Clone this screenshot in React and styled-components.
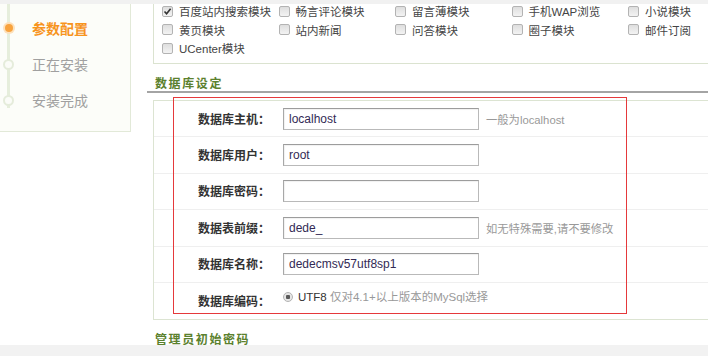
import React from "react";
import styled, { createGlobalStyle } from "styled-components";

const Global = createGlobalStyle`
  html, body { margin: 0; padding: 0; background: #fff; overflow: hidden; }
  body { font-family: "Liberation Sans", "Noto Sans CJK SC", sans-serif; color: #333; }
  * { box-sizing: border-box; }
`;

const Page = styled.div`
  position: relative;
  width: 708px;
  height: 356px;
  overflow: hidden;
  display: flex;
  flex-direction: column;
  background: #fff;
`;

const TopBar = styled.div`
  height: 4px;
  flex: none;
  background: #f1f1f1;
`;

const BottomBar = styled.div`
  height: 11px;
  flex: none;
  background: #f2f2f2;
`;

const Viewport = styled.div`
  flex: 1;
  overflow: hidden;
`;

const Scroll = styled.div`
  margin-top: -8px;
  display: flex;
  align-items: flex-start;
`;

const Sidebar = styled.aside`
  flex: none;
  width: 131px;
  height: 136px;
  background: #fcfdf9;
  border-right: 1px solid #e2e9d8;
  border-bottom: 1px solid #e2e9d8;
`;

const Steps = styled.ul`
  list-style: none;
  margin: 0;
  padding: 14px 0 0;
  background: linear-gradient(#e6eedc, #e6eedc) no-repeat 7px 0 / 3px 112px;
`;

const Step = styled.li`
  display: flex;
  align-items: center;
  height: 36px;
`;

const Dot = styled.span`
  flex: none;
  width: ${(p) => (p.$active ? 8 : 11)}px;
  height: ${(p) => (p.$active ? 8 : 11)}px;
  margin-left: ${(p) => (p.$active ? 4.5 : 3)}px;
  margin-right: ${(p) => (p.$active ? 19.5 : 18)}px;
  border-radius: 50%;
  background: ${(p) => (p.$active ? "#f8a33e" : "#fbfcf8")};
  border: ${(p) => (p.$active ? "none" : "2px solid #e5ecdb")};
  box-shadow: ${(p) => (p.$active ? "0 0 0 2px #fde1bc" : "none")};
`;

const StepLabel = styled.span`
  font-family: "Noto Sans CJK SC", sans-serif;
  font-size: 14px;
  line-height: 18px;
  font-weight: ${(p) => (p.$active ? 700 : 400)};
  color: ${(p) => (p.$active ? "#f7941e" : "#a0a0a0")};
`;

const Content = styled.main`
  flex: none;
  width: 640px;
  margin-left: 16px;
`;

const CheckPanel = styled.div`
  margin-left: 6px;
  border: 1px solid #dbe3d0;
  border-right: none;
  padding: 5px 0 5px 8px;
  display: grid;
  grid-template-columns: repeat(5, 116.5px);
  grid-auto-rows: 18.5px;
`;

const CheckItem = styled.label`
  display: flex;
  align-items: center;
  gap: 6px;
  font-family: "Liberation Sans", "Noto Sans CJK SC", sans-serif;
  font-size: 11.5px;
  color: #444;
  white-space: nowrap;
`;

const Box = styled.span`
  flex: none;
  width: 11px;
  height: 11px;
  border: 1px solid #b3b3b3;
  border-radius: 2px;
  background: linear-gradient(#dedede, #f3f3f3);
  display: flex;
  align-items: center;
  justify-content: center;
`;

const SectionTitle = styled.h3`
  margin: ${(p) => p.$gap}px 0 0;
  padding-left: 8px;
  height: 18px;
  line-height: 16px;
  font-family: "Noto Sans CJK SC", sans-serif;
  font-size: 12px;
  font-weight: 700;
  letter-spacing: 1.6px;
  color: #5b812e;
  border-bottom: ${(p) => (p.$line ? "2px solid #a4a4a4" : "none")};
`;

const FormPanel = styled.div`
  margin: 7.5px 0 0 6px;
  border: 1px solid #dce4d2;
  border-right: none;
`;

const Row = styled.div`
  display: grid;
  grid-template-columns: 129px 1fr;
  align-items: ${(p) => (p.$top ? "start" : "center")};
  height: 36.4px;
  border-bottom: 1px solid #efefef;
  &:last-child { border-bottom: none; }
`;

const Label = styled.span`
  align-self: center;
  padding-left: 44px;
  font-family: "Noto Sans CJK SC", sans-serif;
  font-size: 12px;
  font-weight: 700;
  color: #333;
  line-height: 16px;
`;

const Field = styled.div`
  display: flex;
  align-items: center;
  margin-top: ${(p) => (p.$top ? 6 : 0)}px;
`;

const TextInput = styled.input`
  width: 196px;
  height: 22px;
  padding: 0 5px;
  border: 1px solid #b9b9b9;
  border-top-color: #9c9c9c;
  border-left-color: #a8a8a8;
  box-shadow: inset 1px 1px 1px rgba(0, 0, 0, 0.06);
  font-family: "Liberation Sans", sans-serif;
  font-size: 12px;
  color: #332a55;
  outline: none;
  background: #fff;
`;

const Hint = styled.span`
  margin-left: 7px;
  font-family: "Liberation Sans", "Noto Sans CJK SC", sans-serif;
  font-size: 11.3px;
  color: #999;
`;

const Radio = styled.span`
  flex: none;
  width: 10px;
  height: 10px;
  border-radius: 50%;
  border: 1px solid #b3b3b3;
  background: radial-gradient(circle, #5a5a5a 0 2px, #e6e6e6 2.5px);
  margin-right: 5px;
`;

const RadioText = styled.span`
  font-family: "Liberation Sans", "Noto Sans CJK SC", sans-serif;
  font-size: 11.5px;
  line-height: 16px;
  color: #333;
`;

const Muted = styled.span`
  color: #999;
`;

const Annotation = styled.div`
  position: absolute;
  left: 173px;
  top: 97px;
  width: 454px;
  height: 217px;
  border: 1px solid #e5393b;
  pointer-events: none;
`;

const modules = [
  ["百度站内搜索模块", true],
  ["畅言评论模块"],
  ["留言薄模块"],
  ["手机WAP浏览"],
  ["小说模块"],
  ["黄页模块"],
  ["站内新闻"],
  ["问答模块"],
  ["圈子模块"],
  ["邮件订阅"],
  ["UCenter模块"],
];

const fields = [
  { label: "数据库主机：", value: "localhost", hint: "一般为localhost" },
  { label: "数据库用户：", value: "root" },
  { label: "数据库密码：", value: "" },
  { label: "数据表前缀：", value: "dede_", hint: "如无特殊需要,请不要修改" },
  { label: "数据库名称：", value: "dedecmsv57utf8sp1" },
];

const steps = [
  ["参数配置", true],
  ["正在安装", false],
  ["安装完成", false],
];

export default function App() {
  return (
    <Page>
      <Global />
      <TopBar />
      <Viewport>
        <Scroll>
          <Sidebar>
            <Steps>
              {steps.map(([t, a]) => (
                <Step key={t}>
                  <Dot $active={a} />
                  <StepLabel $active={a}>{t}</StepLabel>
                </Step>
              ))}
            </Steps>
          </Sidebar>
          <Content>
            <CheckPanel>
              {modules.map(([name, checked]) => (
                <CheckItem key={name}>
                  <Box>
                    {checked && (
                      <svg width="9" height="9" viewBox="0 0 9 9">
                        <path d="M1.5 4.5 L3.6 6.8 L7.6 1.8" fill="none" stroke="#333" strokeWidth="1.6" />
                      </svg>
                    )}
                  </Box>
                  {name}
                </CheckItem>
              ))}
            </CheckPanel>
            <SectionTitle $gap={11} $line>数据库设定</SectionTitle>
            <FormPanel>
              {fields.map((f) => (
                <Row key={f.label}>
                  <Label>{f.label}</Label>
                  <Field>
                    <TextInput readOnly value={f.value} />
                    {f.hint && <Hint>{f.hint}</Hint>}
                  </Field>
                </Row>
              ))}
              <Row $top>
                <Label>数据库编码：</Label>
                <Field $top>
                  <Radio />
                  <RadioText>
                    UTF8 <Muted>仅对4.1+以上版本的MySql选择</Muted>
                  </RadioText>
                </Field>
              </Row>
            </FormPanel>
            <SectionTitle $gap={11}>管理员初始密码</SectionTitle>
          </Content>
        </Scroll>
      </Viewport>
      <BottomBar />
      <Annotation />
    </Page>
  );
}
